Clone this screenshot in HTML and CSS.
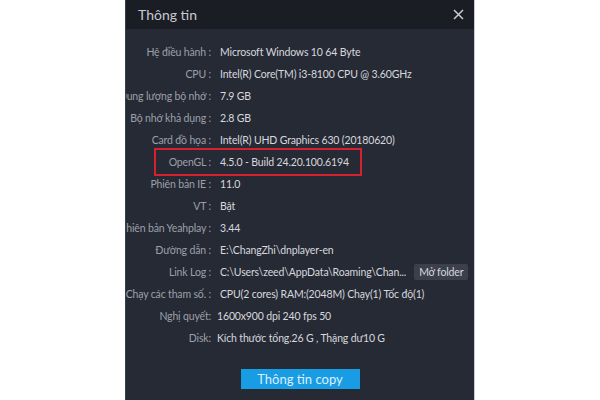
FILE: index.html
```html
<!DOCTYPE html>
<html lang="vi">
<head>
    <meta charset="UTF-8">
    <meta name="viewport" content="width=device-width, initial-scale=1.0">
    <title>Thông tin</title>
    <link rel="stylesheet" href="styles.css">
</head>
<body>
    <div class="dialog">
        <div class="title-bar">
            <span class="title">Thông tin</span>
            <span class="close">
                <svg width="11" height="11" viewBox="0 0 11 11">
                    <path d="M1 1 L10 10 M10 1 L1 10" stroke="#c9cbd1" stroke-width="1.5" fill="none"/>
                </svg>
            </span>
        </div>
        <div class="info">
            <div class="row"><div class="label"><span>Hệ điều hành :</span></div><div class="value">Microsoft Windows 10 64 Byte</div></div>
            <div class="row"><div class="label"><span>CPU :</span></div><div class="value">Intel(R) Core(TM) i3-8100 CPU @ 3.60GHz</div></div>
            <div class="row"><div class="label"><span>Dung lượng bộ nhớ :</span></div><div class="value">7.9 GB</div></div>
            <div class="row"><div class="label"><span>Bộ nhớ khả dụng :</span></div><div class="value">2.8 GB</div></div>
            <div class="row"><div class="label"><span>Card đồ họa :</span></div><div class="value">Intel(R) UHD Graphics 630 (20180620)</div></div>
            <div class="row highlight"><div class="label"><span>OpenGL :</span></div><div class="value">4.5.0 - Build 24.20.100.6194</div></div>
            <div class="row"><div class="label"><span>Phiên bản IE :</span></div><div class="value">11.0</div></div>
            <div class="row"><div class="label"><span>VT :</span></div><div class="value">Bật</div></div>
            <div class="row"><div class="label"><span>Phiên bản Yeahplay :</span></div><div class="value">3.44</div></div>
            <div class="row"><div class="label"><span>Đường dẫn :</span></div><div class="value">E:\ChangZhi\dnplayer-en</div></div>
            <div class="row"><div class="label"><span>Link Log :</span></div><div class="value">C:\Users\zeed\AppData\Roaming\Chan...<button class="folder-btn">Mở folder</button></div></div>
            <div class="row"><div class="label"><span>Chạy các tham số. :</span></div><div class="value">CPU(2 cores) RAM:(2048M) Chạy(1) Tốc độ(1)</div></div>
            <div class="row"><div class="label"><span>Nghị quyết:</span></div><div class="value tight">1600x900 dpi 240 fps 50</div></div>
            <div class="row"><div class="label"><span>Disk:</span></div><div class="value tight">Kích thước tổng.26 G , Thặng dư10 G</div></div>
        </div>
        <div class="footer">
            <button class="copy-btn">Thông tin copy</button>
        </div>
    </div>
</body>
</html>
```

FILE: styles.css
```css
* {
  box-sizing: border-box;
  margin: 0;
  padding: 0;
}

body {
  font-family: 'Lato', 'Noto Sans', sans-serif;
  background-color: #ffffff;
  display: flex;
  justify-content: center;
  height: 400px;
  overflow: hidden;
}

.dialog {
  width: 350px;
  height: 400px;
  background-color: #262a35;
  border-left: 1px solid #3a3e48;
  border-right: 1px solid #c8cad0;
  overflow: hidden;
}

.title-bar {
  height: 29px;
  background-color: #1b1d25;
  display: flex;
  justify-content: space-between;
  align-items: center;
  padding: 0 10px 0 12px;
}

.title {
  font-size: 14px;
  color: #c8cad0;
}

.close {
  display: flex;
  align-items: center;
}

.info {
  padding-top: 12px;
}

.row {
  display: flex;
  align-items: center;
  height: 22px;
  font-size: 10.5px;
  letter-spacing: -0.15px;
  position: relative;
}

.label {
  width: 85px;
  flex-shrink: 0;
  display: flex;
  justify-content: flex-end;
  color: #9ca0a9;
  white-space: nowrap;
}

.value {
  padding-left: 9px;
  color: #d6d8dd;
  white-space: nowrap;
  display: flex;
  align-items: center;
}

.value.tight {
  padding-left: 6px;
}

.highlight::after {
  content: '';
  position: absolute;
  left: 28px;
  top: -3px;
  width: 204px;
  height: 24px;
  border: 2px solid #d3212f;
}

.folder-btn {
  margin-left: 8px;
  height: 16px;
  padding: 0 5px;
  font-family: inherit;
  font-size: 10.5px;
  letter-spacing: -0.15px;
  color: #d6d8dd;
  background-color: #3b404c;
  border: none;
  border-radius: 2px;
}

.footer {
  display: flex;
  justify-content: center;
  padding-top: 20px;
}

.copy-btn {
  width: 119px;
  height: 20px;
  font-family: inherit;
  font-size: 13px;
  color: #dcefff;
  background-color: #189ce3;
  border: none;
}
```
